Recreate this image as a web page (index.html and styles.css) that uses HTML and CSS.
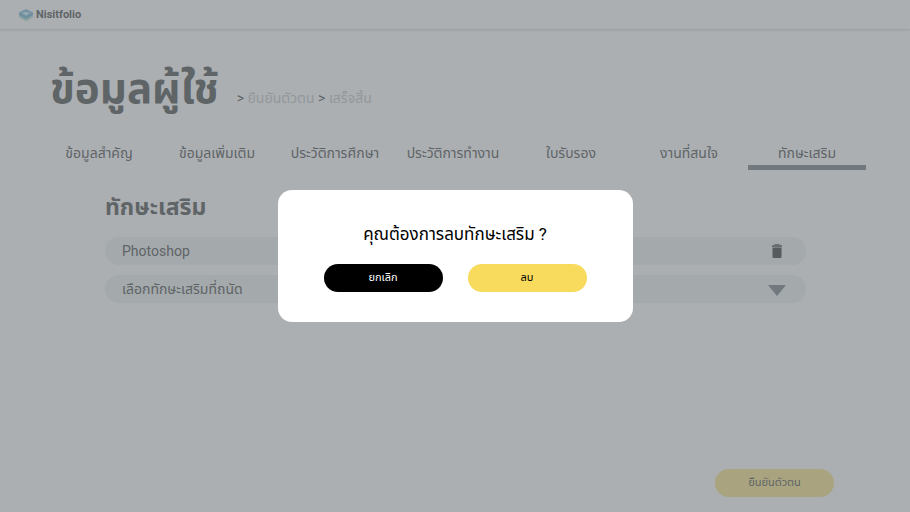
FILE: index.html
```html
<!DOCTYPE html>
<html lang="th">
<head>
<meta charset="utf-8">
<meta name="viewport" content="width=device-width, initial-scale=1">
<title>Nisitfolio</title>
<link rel="stylesheet" href="styles.css">
</head>
<body>
<header class="topbar">
  <a class="brand" href="#">
    <svg class="brand-icon" viewBox="0 0 28 24" aria-hidden="true">
      <path d="M0 8v8l14 8 14-8V8l-14 8z" fill="#7d9c8f"/>
      <path d="M0 8v6l14 8 14-8V8l-14 8z" fill="#8fa9ae"/>
      <path d="M0 7v5l14 8 14-8V7l-14 8z" fill="#6d8b9b"/>
      <path d="M14 0 28 7 14 15 0 7z" fill="#7593a2"/>
      <path d="M6 7h16l-8 5z" fill="#a0b0b6"/>
    </svg>
    <span>Nisitfolio</span>
  </a>
</header>
<main class="page">
  <div class="heading">
    <h1>ข้อมูลผู้ใช้</h1>
    <p class="steps">&gt; <span>ยืนยันตัวตน</span> &gt; <span>เสร็จสิ้น</span></p>
  </div>
  <nav class="tabs">
    <a href="#">ข้อมูลสำคัญ</a>
    <a href="#">ข้อมูลเพิ่มเติม</a>
    <a href="#">ประวัติการศึกษา</a>
    <a href="#">ประวัติการทำงาน</a>
    <a href="#">ใบรับรอง</a>
    <a href="#">งานที่สนใจ</a>
    <a href="#" class="active" aria-current="page">ทักษะเสริม</a>
  </nav>
  <section class="skills">
    <h2 id="skills-title">ทักษะเสริม</h2>
    <div class="field">
      <span>Photoshop</span>
      <button class="delete" type="button" aria-label="ลบ Photoshop">
        <svg viewBox="0 0 10 14" aria-hidden="true"><path d="M3 0h4l1 1h2v2H0V1h2z" opacity=".75"/><path d="M.5 3.5h9V13a1 1 0 0 1-1 1h-7a1 1 0 0 1-1-1z"/></svg>
      </button>
    </div>
    <div class="field">
      <select aria-labelledby="skills-title"><option>เลือกทักษะเสริมที่ถนัด</option></select>
      <svg class="arrow" viewBox="0 0 18 11" aria-hidden="true"><path d="M0 0h18L9 11z"/></svg>
    </div>
  </section>
  <div class="actions"><button class="pill confirm" type="button">ยืนยันตัวตน</button></div>
</main>
<div class="overlay">
  <div class="dialog" role="dialog" aria-modal="true" aria-labelledby="dialog-title">
    <p id="dialog-title">คุณต้องการลบทักษะเสริม ?</p>
    <div class="choices">
      <button class="pill cancel" type="button">ยกเลิก</button>
      <button class="pill remove" type="button">ลบ</button>
    </div>
  </div>
</div>
</body>
</html>
```
FILE: styles.css
```css
* { box-sizing: border-box; margin: 0; }
body {
  min-height: 100vh;
  display: flex;
  flex-direction: column;
  background: #abafb2;
  color: #5f6467;
  font: 14px/20px Roboto, "Noto Sans Thai", "Noto Sans", sans-serif;
}
a { color: inherit; text-decoration: none; }
button, select { font: inherit; color: inherit; border: 0; background: none; padding: 0; }
.topbar {
  height: 29px;
  padding: 0 19px;
  display: flex;
  align-items: center;
  box-shadow: 0 1px 2px #969b9e;
}
.brand { display: flex; align-items: center; gap: 3px; font-size: 11px; font-weight: 700; }
.brand-icon { width: 14px; height: 12px; }
.page { flex: 1; display: flex; flex-direction: column; padding: 32px 44px 15px 40px; }
.heading { display: flex; align-items: baseline; gap: 18px; padding-left: 10px; }
h1 { font-size: 42px; line-height: 56px; }
.steps span { color: #92979a; }
.tabs { display: grid; grid-template-columns: repeat(7, 1fr); margin-top: 23px; }
.tabs a { height: 30px; padding-top: 3px; text-align: center; white-space: nowrap; }
.tabs .active { border-bottom: 5px solid #71797f; }
.skills { display: flex; flex-direction: column; gap: 10px; margin: 22px 60px 0 65px; }
h2 { font-size: 23px; line-height: 32px; margin-bottom: 3px; }
.field {
  height: 28px;
  padding: 0 20px 0 17px;
  display: flex;
  align-items: center;
  justify-content: space-between;
  border-radius: 14px;
  background: #a4a9ac;
}
.delete { width: 18px; height: 20px; display: grid; place-items: center; fill: #565b5e; }
.delete svg { width: 10px; height: 14px; }
.field select { flex: 1; appearance: none; }
.arrow { width: 18px; height: 11px; margin-top: 3px; fill: #71797f; }
.pill { width: 119px; height: 28px; border-radius: 14px; font-size: 11px; }
.actions { display: flex; justify-content: flex-end; margin-top: auto; padding-right: 32px; }
.confirm { background: #a9a47f; }
.overlay { position: fixed; inset: 0; display: grid; place-items: center; }
.dialog {
  padding: 30px 46px 30px;
  border-radius: 14px;
  background: #fff;
  color: #000;
  text-align: center;
}
.dialog p { font-size: 17px; line-height: 28px; margin-bottom: 16px; }
.choices { display: flex; gap: 25px; }
.cancel { background: #000; color: #fff; }
.remove { background: #f8db5c; }
```
